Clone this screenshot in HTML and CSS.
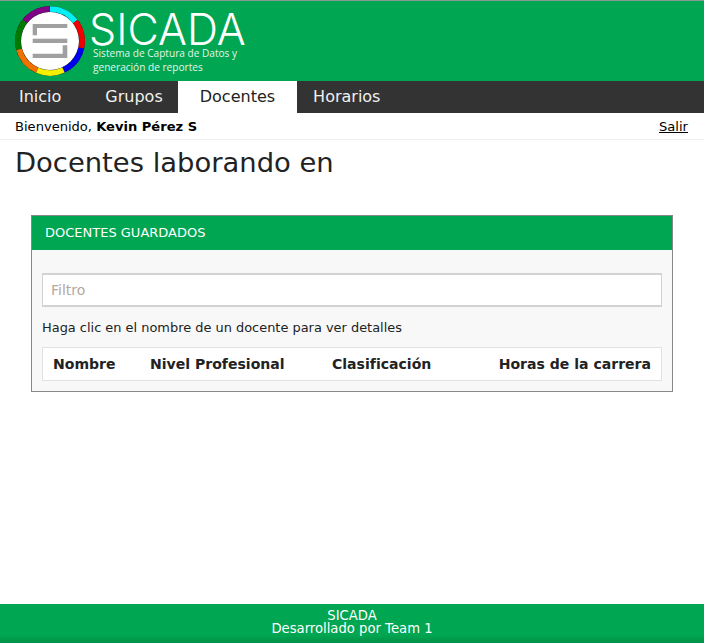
FILE: index.html
```html
<!DOCTYPE html>
<html lang="es">
<head>
<meta charset="utf-8">
<title>SICADA</title>
<link rel="stylesheet" href="styles.css">
</head>
<body>
<header class="banner">
  <svg class="logo" width="74" height="74" viewBox="0 0 74 74" aria-hidden="true">
    <circle cx="37" cy="37" r="35" fill="#222"/>
    <circle cx="37" cy="37" r="29" fill="#fff"/>
    <g fill="none" stroke-width="5.600">
      <path d="M37 5A32 32 0 0 1 62.300 17.500" stroke="#00f0f5"/>
      <path d="M62.300 17.500A32 32 0 0 1 68.200 44" stroke="#f00000"/>
      <path d="M68.200 44A32 32 0 0 1 50.500 66" stroke="#0000f0"/>
      <path d="M50.500 66A32 32 0 0 1 24.100 66.200" stroke="#f5f000"/>
      <path d="M24.100 66.200A32 32 0 0 1 6 45.200" stroke="#f07000"/>
      <path d="M6 45.200A32 32 0 0 1 12 17.200" stroke="#007a00"/>
      <path d="M12 17.200A32 32 0 0 1 37 5" stroke="#800088"/>
    </g>
    <g fill="#a0a0a0">
      <path d="M19.700 20H54.300V24H24V31.300H19.700Z"/>
      <rect x="19.700" y="34.700" width="34.600" height="4.300"/>
      <path d="M49.700 41.300H54.300V54H19.700V49.700H49.700Z"/>
    </g>
  </svg>
  <div class="brand">
    <div class="brand-name">SICADA</div>
    <div class="brand-sub">Sistema de Captura de Datos y<br>generación de reportes</div>
  </div>
</header>
<nav class="tabs">
  <a class="tab tab-inicio" href="#">Inicio</a>
  <a class="tab tab-grupos" href="#">Grupos</a>
  <a class="tab tab-docentes" href="#">Docentes</a>
  <a class="tab tab-horarios" href="#">Horarios</a>
</nav>
<div class="userbar">
  <span>Bienvenido, <strong>Kevin Pérez S</strong></span>
  <a class="logout" href="#">Salir</a>
</div>
<main class="content">
  <h1 class="title">Docentes laborando en</h1>
  <section class="panel">
    <h2 class="panel-head">DOCENTES GUARDADOS</h2>
    <div class="panel-body">
      <input class="filter" type="text" placeholder="Filtro">
      <p class="hint">Haga clic en el nombre de un docente para ver detalles</p>
      <div class="table-head">
        <span>Nombre</span>
        <span>Nivel Profesional</span>
        <span>Clasificación</span>
        <span>Horas de la carrera</span>
      </div>
    </div>
  </section>
</main>
<footer class="footer">
  <div>SICADA</div>
  <div>Desarrollado por Team 1</div>
</footer>
</body>
</html>
```
FILE: styles.css
```css
* { box-sizing: border-box; }
html, body { margin: 0; height: 100%; }
body {
  display: flex;
  flex-direction: column;
  min-height: 643px;
  font-family: "DejaVu Sans", sans-serif;
  color: #222;
  background: #fff;
}
.banner {
  display: flex;
  align-items: flex-start;
  height: 81px;
  background: #00a651;
  border-top: 1px solid #8a9a90;
  padding-left: 13px;
}
.logo { margin-top: 3px; flex: none; }
.brand { margin-left: 2px; color: #fff; }
.brand-name {
  font-family: Inter, sans-serif;
  font-weight: 300;
  font-size: 43px;
  line-height: 44px;
  margin-top: 6px;
}
.brand-sub {
  font-family: "Open Sans", sans-serif;
  font-size: 10.1px;
  line-height: 14px;
  margin: -5px 0 0 4px;
  color: #e4f5ea;
}
.tabs {
  display: flex;
  height: 32px;
  background: #333;
}
.tab {
  font-size: 16px;
  line-height: 31px;
  color: #f0f0f0;
  text-decoration: none;
}
.tab-inicio { padding: 0 22px 0 19px; }
.tab-grupos { padding: 0 15px 0 22px; }
.tab-docentes { padding: 0 22px; background: #fff; color: #222; }
.tab-horarios { padding: 0 16px; }
.userbar {
  display: flex;
  justify-content: space-between;
  align-items: center;
  height: 27px;
  padding: 0 16px 0 15px;
  border-bottom: 1px solid #eee;
  font-size: 13.07px;
  color: #000;
}
.logout { color: #000; }
.content { flex: 1; }
.title {
  margin: 4px 0 0 15px;
  font-size: 27.4px;
  font-weight: 400;
  line-height: 37px;
}
.panel {
  margin: 34px 31px 0;
  border: 1px solid #888;
  background: #f8f8f8;
}
.panel-head {
  margin: 0;
  height: 34px;
  padding-left: 13px;
  background: #00a651;
  color: #fff;
  font-size: 13px;
  font-weight: 400;
  line-height: 33px;
}
.panel-body { padding: 23px 10px 10px; }
.filter {
  display: block;
  width: 100%;
  height: 34px;
  padding: 0 8px;
  border-style: solid;
  border-width: 2px 1px;
  border-color: #d2d2d2;
  background: #fff;
  font: 14px "DejaVu Sans", sans-serif;
  border-radius: 0;
  outline: 0;
}
.filter::placeholder { color: #b5a8a0; opacity: 1; }
.hint {
  margin: 12px 0 0;
  font-size: 12.93px;
  line-height: 17px;
}
.table-head {
  display: grid;
  grid-template-columns: 97px 182px 1fr auto;
  align-items: center;
  height: 34px;
  margin-top: 11px;
  padding: 0 10px;
  background: #fff;
  border: 1px solid #e2e2e2;
  font-size: 14.05px;
  font-weight: 700;
}
.footer {
  height: 39px;
  padding-top: 5px;
  background: linear-gradient(#00a651 80%, #009048);
  color: #fff;
  font-size: 13.2px;
  line-height: 13px;
  text-align: center;
}
```
